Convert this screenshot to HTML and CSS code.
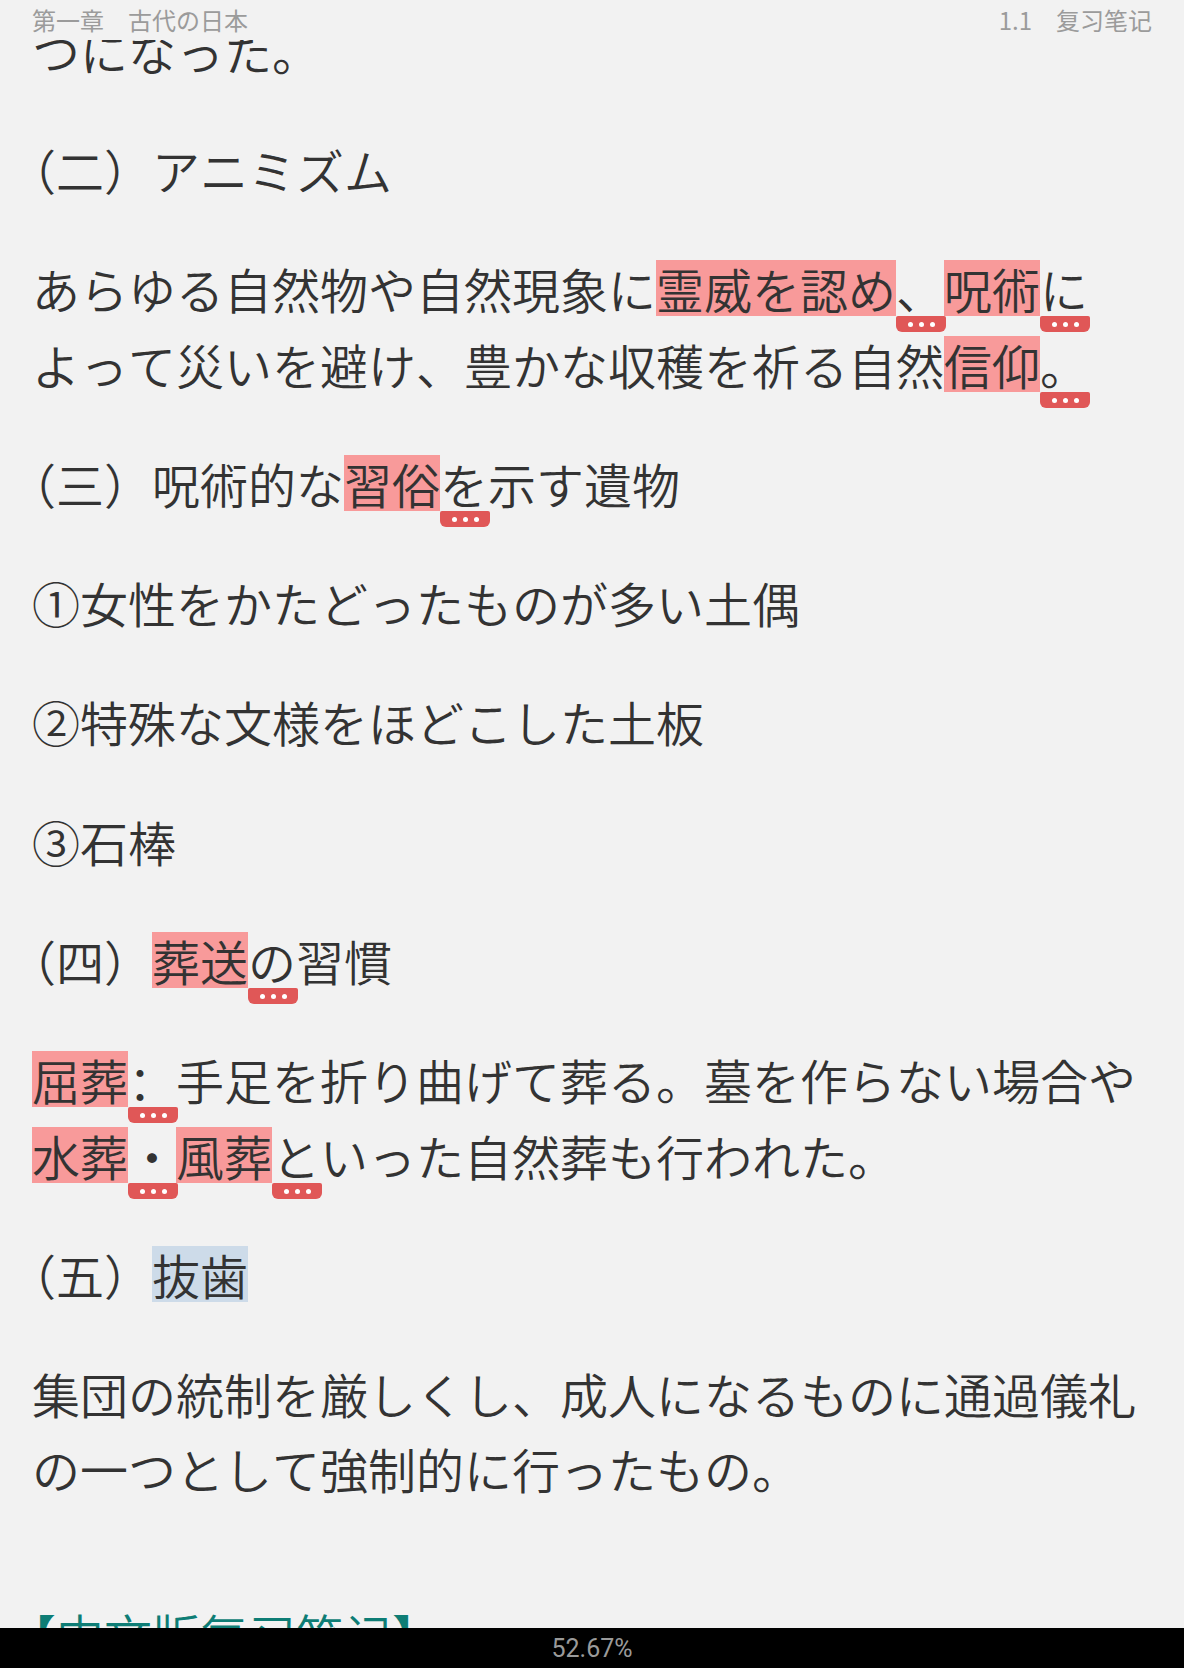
FILE: index.html
```html
<!DOCTYPE html>
<html lang="ja">
<head>
<meta charset="utf-8">
<title>古代の日本 - 复习笔记</title>
<link rel="stylesheet" href="styles.css">
</head>
<body>

<div class="screen">
  <header class="running-head">
    <span>第一章　古代の日本</span>
    <span lang="zh-CN" class="zh">1.1　复习笔记</span>
  </header>

  <main class="reader">
    <div class="page">
      <p>つになった。</p>

      <p><span class="open">（</span>二）アニミズム</p>

      <p>あらゆる自然物や自然現象に<span class="hl">霊威を認め<span class="more"></span></span>、<span class="hl">呪術<span class="more"></span></span>に<br>よって災いを避け、豊かな収穫を祈る自然<span class="hl">信仰<span class="more"></span></span>。</p>

      <p><span class="open">（</span>三）呪術的な<span class="hl">習俗<span class="more"></span></span>を示す遺物</p>

      <p>①女性をかたどったものが多い土偶</p>

      <p>②特殊な文様をほどこした土板</p>

      <p>③石棒</p>

      <p><span class="open">（</span>四）<span class="hl">葬送<span class="more"></span></span>の習慣</p>

      <p><span class="hl">屈葬<span class="more"></span></span><span class="zh" lang="zh-CN">：</span>手足を折り曲げて葬る。墓を作らない場合や<span class="hl">水葬<span class="more"></span></span>・<span class="hl">風葬<span class="more"></span></span>といった自然葬も行われた。</p>

      <p><span class="open">（</span>五）<span class="hl blue">抜歯</span></p>

      <p>集団の統制を厳しくし、成人になるものに通過儀礼の一つとして強制的に行ったもの。</p>

      <h2 class="section zh" lang="zh-CN"><span class="open">【</span>中文版复习笔记】</h2>
    </div>
  </main>

  <footer class="progress">52.67%</footer>
</div>

</body>
</html>
```

FILE: styles.css
```css
body {
    margin: 0;
    background-color: #f2f2f2;
    font-family: "Noto Sans CJK JP", sans-serif;
    font-kerning: none;
    color: #333;
}

.zh {
    font-family: "Noto Sans CJK SC", "Noto Sans CJK JP", sans-serif;
}

.screen {
    height: 1668px;
    display: flex;
    flex-direction: column;
    overflow: hidden;
}

/* top line with chapter / section names */
.running-head {
    flex: none;
    height: 40px;
    padding: 0 32px;
    display: flex;
    justify-content: space-between;
    align-items: center;
    font-size: 24px;
    line-height: 1;
    color: #9b9b9b;
    position: relative;
    z-index: 1;
    background-color: #f2f2f2;
}

.reader {
    flex: 1;
    overflow: hidden;
}

/* the page is scrolled, so the first line is cut by the header */
.page {
    margin-top: -27px;
    padding: 0 32px;
    font-size: 48px;
    font-weight: 350;
    line-height: 75.5px;
    text-spacing-trim: space-all;
}

.page p {
    margin: 0 0 43.7px;
}

.open {
    font-feature-settings: "halt";
}

/* highlighted words */
.hl {
    display: inline-block;
    position: relative;
    line-height: 56px;
    background-color: #f89a9a;
}

.hl.blue {
    background-color: #cddbe9;
}

/* little "more" tab under a highlight */
.more {
    position: absolute;
    left: 100%;
    top: 100%;
    width: 50px;
    height: 16px;
    background-color: #e05757;
    border-radius: 2px 2px 6px 6px;
}

.more::before {
    content: "";
    position: absolute;
    left: 23px;
    top: 6px;
    width: 5px;
    height: 5px;
    border-radius: 50%;
    background-color: #fff;
    box-shadow: -11px 0 0 #fff, 11px 0 0 #fff;
}

.section {
    margin: 90px 0 0;
    font-size: 48px;
    font-weight: 350;
    line-height: 75.5px;
    color: #0e7d75;
}

/* reading progress bar */
.progress {
    flex: none;
    height: 40px;
    background-color: #000;
    color: #9a9a9a;
    font-family: Roboto, "Liberation Sans", sans-serif;
    font-size: 25px;
    display: flex;
    align-items: center;
    justify-content: center;
}
```
